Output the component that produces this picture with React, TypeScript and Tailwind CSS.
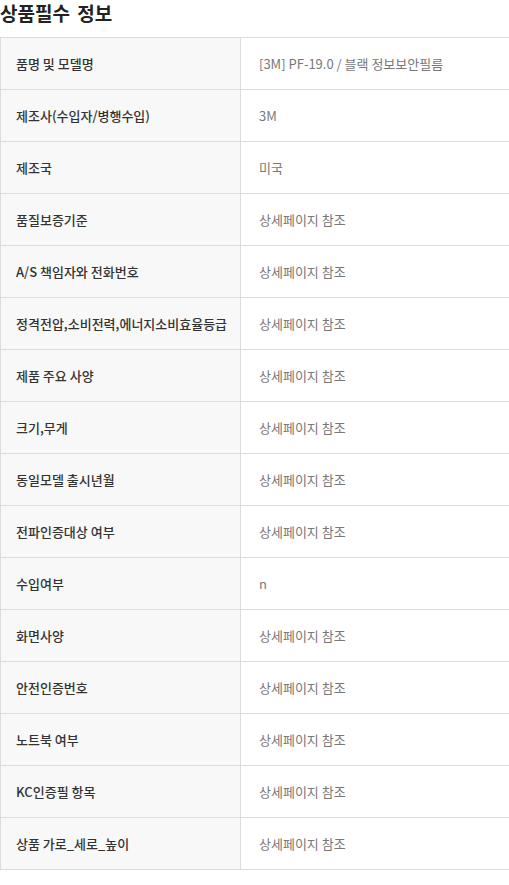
const rows: [string, string][] = [
  ['품명 및 모델명', '[3M] PF-19.0 / 블랙 정보보안필름'],
  ['제조사(수입자/병행수입)', '3M'],
  ['제조국', '미국'],
  ['품질보증기준', '상세페이지 참조'],
  ['A/S 책임자와 전화번호', '상세페이지 참조'],
  ['정격전압,소비전력,에너지소비효율등급', '상세페이지 참조'],
  ['제품 주요 사양', '상세페이지 참조'],
  ['크기,무게', '상세페이지 참조'],
  ['동일모델 출시년월', '상세페이지 참조'],
  ['전파인증대상 여부', '상세페이지 참조'],
  ['수입여부', 'n'],
  ['화면사양', '상세페이지 참조'],
  ['안전인증번호', '상세페이지 참조'],
  ['노트북 여부', '상세페이지 참조'],
  ['KC인증필 항목', '상세페이지 참조'],
  ['상품 가로_세로_높이', '상세페이지 참조'],
];

export default function App() {
  return (
    <div
      className="w-[509px] bg-white"
      style={{ fontFamily: '"Noto Sans CJK KR", "Noto Sans", sans-serif' }}
    >
      <h2 className="h-[37px] text-[19px] font-bold leading-[26px] text-[#222] [word-spacing:3px]">
        상품필수 정보
      </h2>
      <div className="border-t border-l border-[#dcdcdc]">
        {rows.map(([label, value]) => (
          <div key={label} className="flex h-[52px] border-b border-[#dcdcdc]">
            <div className="flex w-[240px] shrink-0 items-center border-r border-[#dcdcdc] bg-[#f8f8f8] pl-[15px] text-[13px] font-medium text-[#333]">
              {label}
            </div>
            <div className="flex flex-1 items-center pl-[18px] text-[13px] text-[#777]">
              {value}
            </div>
          </div>
        ))}
      </div>
    </div>
  );
}
